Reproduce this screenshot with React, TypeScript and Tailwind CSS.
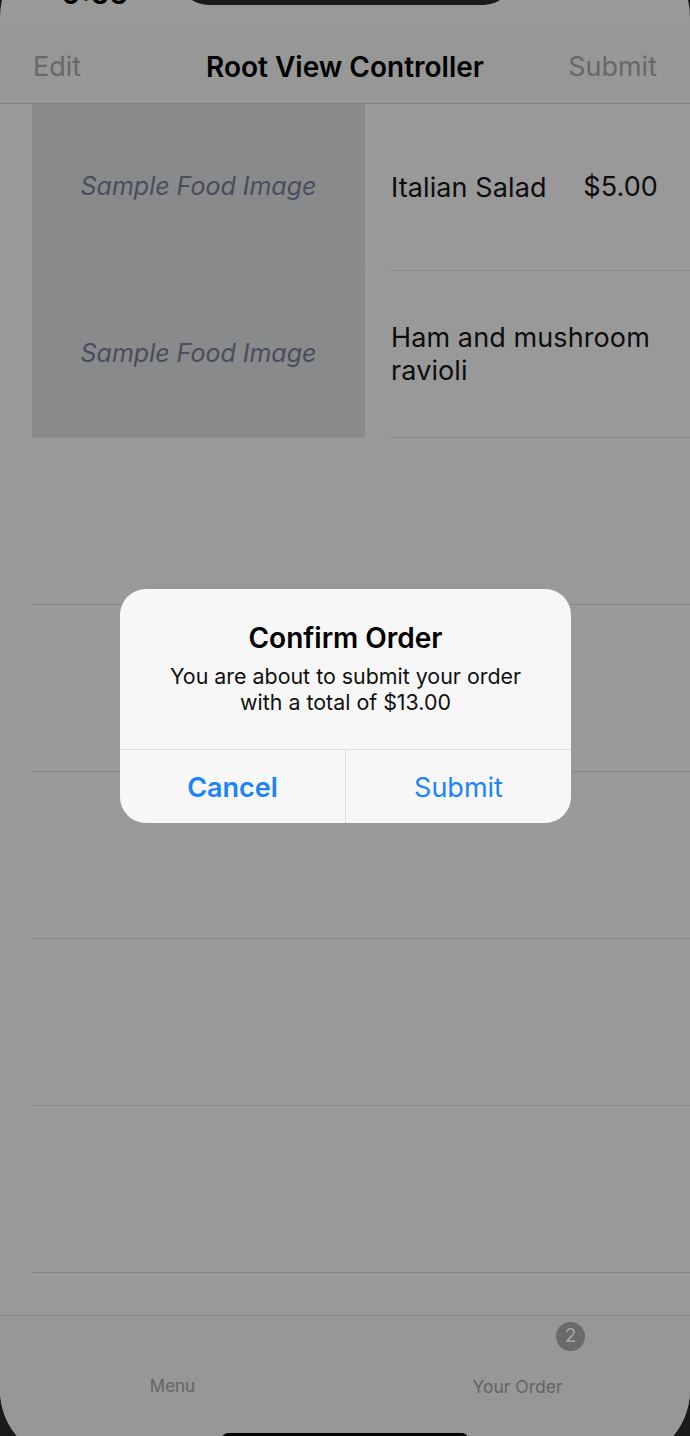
import React from "react";

const font = { fontFamily: "Inter, 'Noto Sans', sans-serif" };

function ImageRow({ name, price }: { name: React.ReactNode; price?: string }) {
  return (
    <div className="flex h-[167px] pl-[32px]">
      <div className="flex w-[333px] items-center justify-center bg-[#898a8c] border-b border-[#8f9092]">
        <span className="text-[25px] italic text-[#4a4d5b] tracking-[0px]">Sample Food Image</span>
      </div>
      <div className="ml-[25px] flex flex-1 items-center justify-between border-b border-[#878787] pr-[32px] pl-[1px]">
        <div className="text-[27px] leading-[33px] text-[#0d0d0d] tracking-[0.1px]">{name}</div>
        {price && <div className="text-[27px] text-[#0d0d0d] tracking-[0.1px]">{price}</div>}
      </div>
    </div>
  );
}

function EmptyRow() {
  return <div className="ml-[32px] h-[167px] border-b border-[#878787]" />;
}

export default function App() {
  return (
    <div className="relative h-[1436px] w-[690px] overflow-hidden bg-[#1a1a1a]" style={font}>
      <div className="-mt-[54px] flex h-[1515px] flex-col overflow-hidden rounded-[71px] bg-[#999999]">
        {/* status bar */}
        <div className="flex h-[84px] shrink-0 items-start">
          <div className="flex h-full w-[180px] items-end justify-center pb-[22px] pl-[10px]">
            <span className="text-[30px] font-semibold leading-[30px] text-black">9:55</span>
          </div>
          <div className="h-[59px] w-[332px] rounded-b-[28px] bg-[#1a1a1a]" />
          <div className="flex h-full flex-1 items-end gap-[20px] pb-[81px] pl-[24px]">
            <div className="flex items-end gap-[4px]">
              <div className="h-[12px] w-[6px] rounded-[1px] bg-[#7a7a7a]" />
              <div className="h-[14px] w-[6px] rounded-[1px] bg-[#7a7a7a]" />
              <div className="h-[16px] w-[6px] rounded-[1px] bg-[#7a7a7a]" />
              <div className="h-[18px] w-[6px] rounded-[1px] bg-[#7a7a7a]" />
            </div>
            <div className="h-[10px] w-[10px] rotate-45 bg-black" />
            <div className="flex h-[20px] w-[40px] items-center rounded-[6px] border-2 border-[#7d7d7d] px-[2px]">
              <div className="h-[10px] w-[4px] rounded-[2px] bg-[#e0463b]" />
            </div>
          </div>
        </div>

        {/* nav bar */}
        <div className="grid h-[74px] shrink-0 grid-cols-[1fr_auto_1fr] items-center border-b border-[#858585] bg-[#979797] px-[33px] pt-[1px]">
          <span className="justify-self-start text-[27px] text-[#686868]">Edit</span>
          <span className="text-[28px] font-semibold text-black tracking-[0px]">Root View Controller</span>
          <span className="justify-self-end text-[27px] text-[#686868]">Submit</span>
        </div>

        {/* list */}
        <div className="flex flex-1 flex-col">
          <ImageRow name="Italian Salad" price="$5.00" />
          <ImageRow
            name={
              <>
                Ham and mushroom
                <br />
                ravioli
              </>
            }
          />
          <EmptyRow />
          <EmptyRow />
          <EmptyRow />
          <EmptyRow />
          <EmptyRow />
        </div>

        {/* tab bar */}
        <div className="relative flex h-[146px] shrink-0 border-t border-[#858585] bg-[#979797]">
          <div className="flex flex-1 justify-center pt-[58px]">
            <span className="text-[17px] text-[#646464]">Menu</span>
          </div>
          <div className="relative flex flex-1 justify-center pt-[58px]">
            <span className="text-[17.5px] text-[#646464]">Your Order</span>
            <div className="absolute left-[211px] top-[6px] flex h-[29px] w-[29px] items-center justify-center rounded-full bg-[#6a6a6a] text-[19px] text-[#a6a6a6]">
              2
            </div>
          </div>
          <div className="absolute left-[222px] top-[117px] h-[12px] w-[246px] rounded-full bg-black" />
        </div>
      </div>

      {/* alert */}
      <div className="absolute left-[120px] top-[589px] flex h-[234px] w-[451px] flex-col overflow-hidden rounded-[26px] bg-[#f7f7f7]">
        <div className="flex h-[160px] flex-col items-center pt-[32px] text-center">
          <div className="text-[28px] font-semibold leading-[34px] text-black tracking-[0px]">Confirm Order</div>
          <div className="mt-[8px] text-[21.4px] leading-[26px] text-[#111]">
            You are about to submit your order
            <br />
            with a total of $13.00
          </div>
        </div>
        <div className="flex flex-1 border-t border-[#dedede]">
          <div className="flex flex-1 items-center justify-center border-r border-[#dedede] pt-[3px]">
            <span className="text-[27px] font-semibold text-[#1d83fb]">Cancel</span>
          </div>
          <div className="flex flex-1 items-center justify-center pt-[3px]">
            <span className="text-[27px] text-[#1d83fb]">Submit</span>
          </div>
        </div>
      </div>
    </div>
  );
}
